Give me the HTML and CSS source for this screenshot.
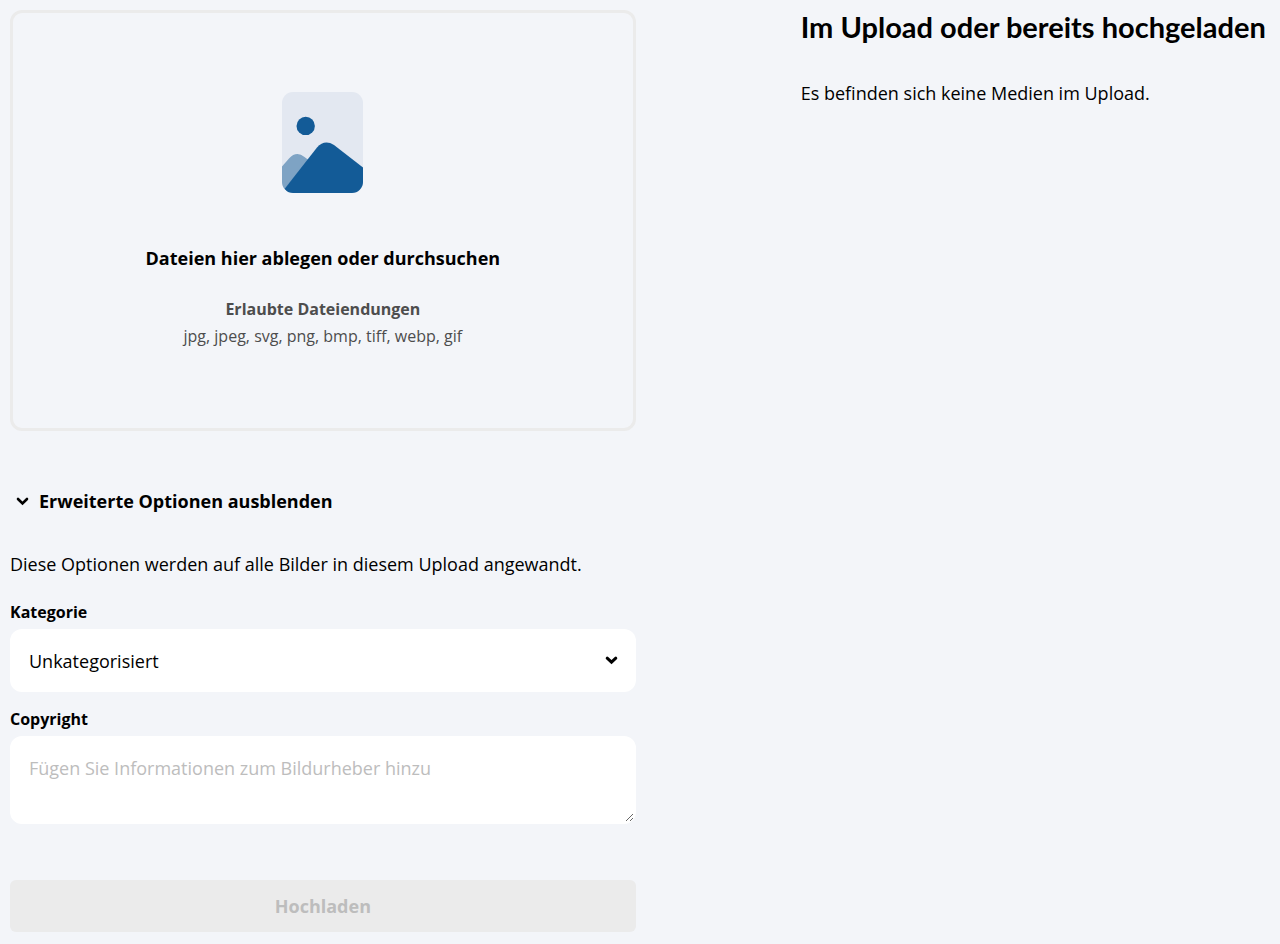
FILE: index.html
```html
<!DOCTYPE html>
<html lang="de">
<head>
    <meta charset="UTF-8">
    <meta name="viewport" content="width=device-width, initial-scale=1.0">
    <title>Medien hochladen</title>
    <link rel="stylesheet" href="styles.css">
</head>
<body>
    <main class="upload">
        <form class="upload-form">
            <button type="button" class="dropzone">
                <svg class="dropzone-icon" width="81" height="101" viewBox="0 0 81 101" aria-hidden="true">
                    <clipPath id="card"><rect width="81" height="101" rx="11"></rect></clipPath>
                    <g clip-path="url(#card)">
                        <rect width="81" height="101" fill="#e3e8f1"></rect>
                        <circle cx="23.7" cy="33.9" r="9.2" fill="#135b97"></circle>
                        <path d="M0 74.5 7 66.5Q14.500 58.500 22.500 65L26.500 68 3 97 0 101Z" fill="#7ea3c4"></path>
                        <path d="M2.5 97 35 55.5Q42.500 47 52 53L81 75.500V101H6Z" fill="#135b97"></path>
                    </g>
                </svg>
                <span class="dropzone-title">Dateien hier ablegen oder durchsuchen</span>
                <span class="dropzone-hint"><strong>Erlaubte Dateiendungen</strong></span>
                <span class="dropzone-hint">jpg, jpeg, svg, png, bmp, tiff, webp, gif</span>
            </button>

            <button type="button" class="toggle" aria-expanded="true" aria-controls="options">
                <svg width="13" height="9" viewBox="0 0 13 9" aria-hidden="true">
                    <path d="M2 2l4.500 4.500L11 2" fill="none" stroke="#000" stroke-width="2.600" stroke-linecap="round"></path>
                </svg>
                Erweiterte Optionen ausblenden
            </button>

            <div class="options" id="options">
                <p>Diese Optionen werden auf alle Bilder in diesem Upload angewandt.</p>

                <label for="category">Kategorie</label>
                <div class="select">
                    <select id="category">
                        <option>Unkategorisiert</option>
                    </select>
                    <svg class="select-arrow" width="13" height="9" viewBox="0 0 13 9" aria-hidden="true">
                        <path d="M2.200 2.200l4.300 4 4.300-4" fill="none" stroke="#000" stroke-width="3" stroke-linecap="round"></path>
                    </svg>
                </div>

                <label for="copyright">Copyright</label>
                <textarea id="copyright" placeholder="Fügen Sie Informationen zum Bildurheber hinzu"></textarea>
            </div>

            <button type="submit" class="submit" disabled>Hochladen</button>
        </form>

        <section class="queue">
            <h2>Im Upload oder bereits hochgeladen</h2>
            <p>Es befinden sich keine Medien im Upload.</p>
        </section>
    </main>
</body>
</html>
```

FILE: styles.css
```css
* {
    margin: 0;
    padding: 0;
    box-sizing: border-box;
}

body {
    font-family: 'Open Sans', sans-serif;
    font-size: 18px;
    line-height: 28px;
    color: #000;
    background: #f3f5f9;
}

button,
select,
textarea {
    font: inherit;
    color: inherit;
    border: none;
}

.upload {
    display: grid;
    grid-template-columns: 4fr 3fr;
    gap: 165px;
    padding: 10px;
}

.upload-form {
    display: flex;
    flex-direction: column;
}

.dropzone {
    display: flex;
    flex-direction: column;
    align-items: center;
    padding: 79px 20px 78px;
    border: 3px solid #ebebeb;
    border-radius: 12px;
    background: none;
    cursor: pointer;
}

.dropzone-icon {
    margin-bottom: 51px;
}

.dropzone-title {
    margin-bottom: 24px;
    font-weight: 700;
}

.dropzone-hint {
    font-size: 16px;
    line-height: 27px;
    color: #4d4d4d;
}

.toggle {
    display: flex;
    align-items: center;
    align-self: flex-start;
    gap: 10px;
    margin: 56px 0 35px;
    padding-left: 6px;
    font-weight: 700;
    background: none;
    cursor: pointer;
}

.options {
    display: flex;
    flex-direction: column;
}

.options p {
    margin-bottom: 20px;
}

.options label {
    margin-bottom: 3px;
    font-size: 16px;
    font-weight: 700;
}

.select {
    position: relative;
    margin-bottom: 13px;
}

.select select {
    display: block;
    width: 100%;
    height: 63px;
    padding: 0 50px 0 19px;
    border-radius: 12px;
    background: #fff;
    appearance: none;
}

.select-arrow {
    position: absolute;
    top: 27px;
    right: 18px;
    pointer-events: none;
}

.options textarea {
    width: 100%;
    height: 88px;
    padding: 16px 17px;
    border: 2px solid #fff;
    border-radius: 12px;
    background: #fff;
    resize: vertical;
}

.options textarea::placeholder {
    color: #bdbdbd;
}

.submit {
    height: 52px;
    margin-top: 56px;
    border-radius: 6px;
    font-weight: 700;
    color: #bdbdbd;
    background: #ebebeb;
}

.queue h2 {
    margin-bottom: 35px;
    font-family: Lato, sans-serif;
    font-size: 29px;
    line-height: 34px;
    white-space: nowrap;
}
```
